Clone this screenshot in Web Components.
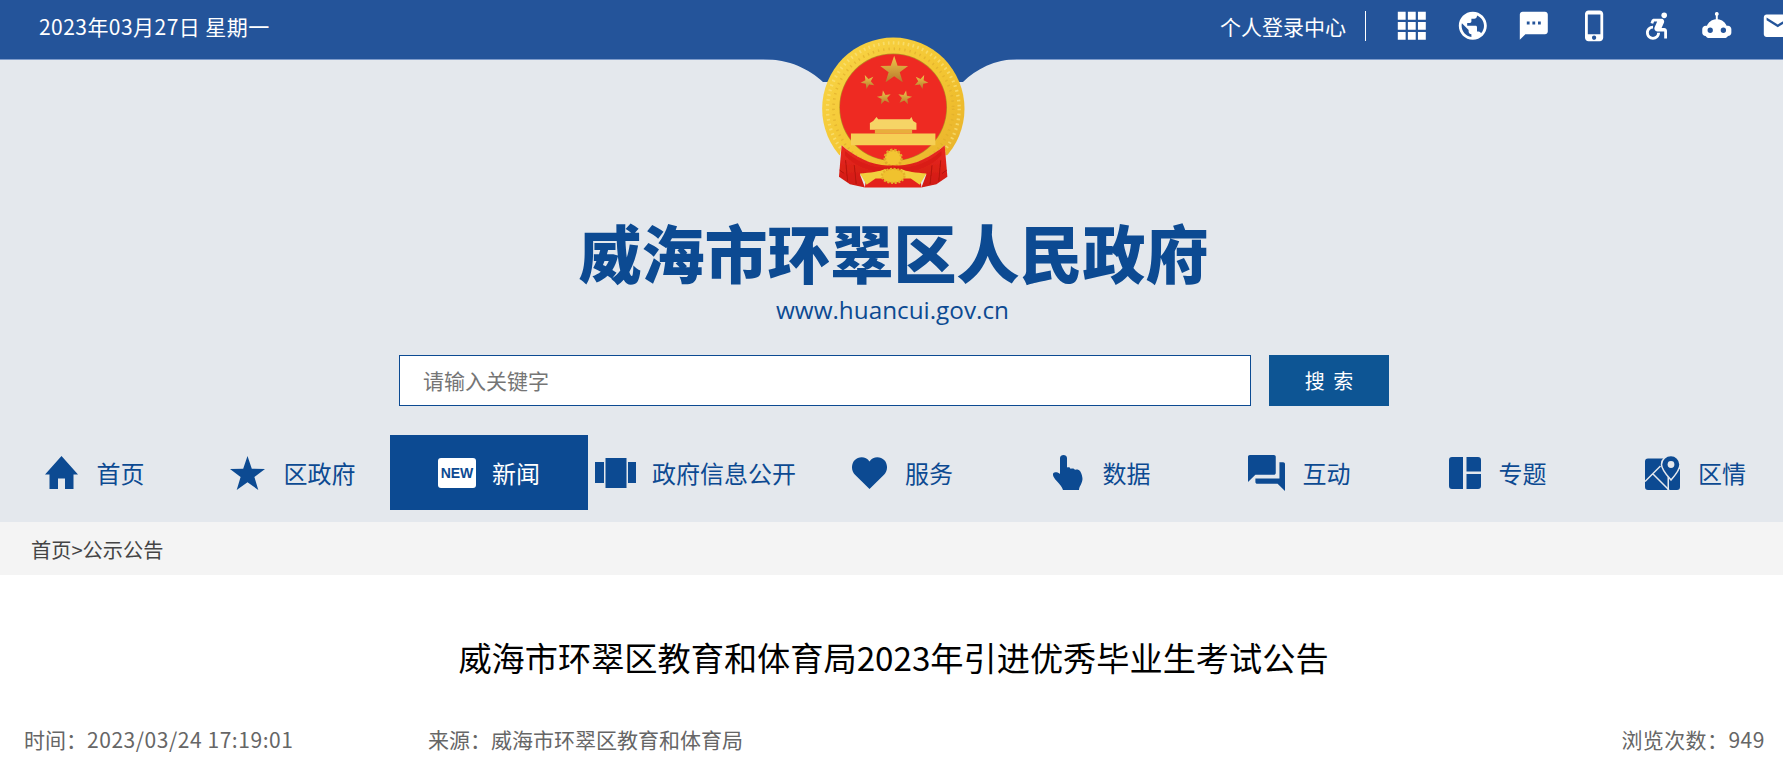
<!DOCTYPE html>
<html lang="zh-CN">
<head>
<meta charset="utf-8">
<title>威海市环翠区人民政府</title>
<style>
    html, body { margin: 0; padding: 0; height: 100%; overflow: hidden; background: #fff; }
    body { font-family: "Noto Sans CJK SC", "Noto Sans", sans-serif; }
    .top-ic { display: block; width: 33.6px; height: 33.6px; fill: #fff; }
    .nav-ic { display: block; fill: currentColor; }
</style>
</head>
<body>

<site-topbar date="2023年03月27日 星期一" login="个人登录中心">
    <svg class="top-ic" viewBox="0 0 24 24"><path d="M2 2h5.6v5.6H2zM9.2 2h5.6v5.6H9.2zM16.4 2H22v5.6h-5.6zM2 9.2h5.6v5.6H2zM9.2 9.2h5.6v5.6H9.2zM16.4 9.2H22v5.6h-5.6zM2 16.4h5.6V22H2zM9.2 16.4h5.6V22H9.2zM16.4 16.4H22V22h-5.6z"/></svg>
    <svg class="top-ic" viewBox="0 0 24 24"><path d="M12 2C6.48 2 2 6.48 2 12s4.48 10 10 10 10-4.48 10-10S17.52 2 12 2zm-1 17.93c-3.95-.49-7-3.85-7-7.93 0-.62.08-1.21.21-1.79L9 15v1c0 1.1.9 2 2 2v1.93zm6.9-2.54c-.26-.81-1-1.39-1.9-1.39h-1v-3c0-.55-.45-1-1-1H8v-2h2c.55 0 1-.45 1-1V7h2c1.1 0 2-.9 2-2v-.41c2.93 1.19 5 4.06 5 7.41 0 2.08-.8 3.97-2.1 5.39z"/></svg>
    <svg class="top-ic" viewBox="0 0 24 24"><path d="M20 2H4c-1.1 0-1.99.9-1.99 2L2 22l4-4h14c1.1 0 2-.9 2-2V4c0-1.1-.9-2-2-2zM9 11H7V9h2v2zm4 0h-2V9h2v2zm4 0h-2V9h2v2z"/></svg>
    <svg class="top-ic" viewBox="0 0 24 24"><path d="M15.5 1h-8C6.12 1 5 2.12 5 3.5v17C5 21.88 6.12 23 7.5 23h8c1.38 0 2.5-1.12 2.5-2.5v-17C18 2.12 16.88 1 15.5 1zm-4 21c-.83 0-1.5-.67-1.5-1.5s.67-1.5 1.5-1.5 1.5.67 1.5 1.5-.67 1.5-1.5 1.5zm4.500-4H7V4h9v14z"/></svg>
    <svg class="top-ic" viewBox="0 0 24 24"><circle cx="18" cy="4.54" r="2"/><path d="M15 17h-2c0 1.65-1.35 3-3 3s-3-1.35-3-3 1.35-3 3-3v-2c-2.76 0-5 2.24-5 5s2.24 5 5 5 5-2.24 5-5zm3-3.5h-1.86l1.67-3.67C18.42 8.5 17.44 7 15.96 7h-5.2c-.81 0-1.54.47-1.87 1.2L8.22 10l1.92.53.65-1.53H13l-1.83 4.1c-.6 1.33.39 2.9 1.85 2.9H18v5h2v-5.5c0-1.1-.9-2-2-2z"/></svg>
    <svg class="top-ic" viewBox="0 0 24 24"><path fill-rule="evenodd" d="M12 2.200a1.400 1.400 0 0 1 .7 2.600v2.500c3 .3 5.400 2.200 6.300 4.700h1c1.300 0 2.300 1 2.400 2.300v2.700c0 1.300-1 2.300-2.400 2.300-.5.900-1.400 1.500-2.500 1.500H6.500c-1.100 0-2-.6-2.500-1.500-1.400 0-2.400-1-2.400-2.300v-2.700c.1-1.300 1.100-2.300 2.400-2.300h1c.9-2.500 3.300-4.400 6.300-4.700V4.800a1.400 1.400 0 0 1 .7-2.600zM7.300 13.300a1.900 1.900 0 1 0 0 3.800 1.900 1.900 0 0 0 0-3.800zm9.400 0a1.900 1.900 0 1 0 0 3.800 1.900 1.900 0 0 0 0-3.800z"/></svg>
    <svg class="top-ic" viewBox="0 0 24 24"><path d="M20 4H4c-1.100 0-2 .9-2 2v12c0 1.100.9 2 2 2h16c1.100 0 2-.9 2-2V6c0-1.100-.9-2-2-2zm0 4l-8 5-8-5V6l8 5 8-5v2z"/></svg>
</site-topbar>

<site-masthead title="威海市环翠区人民政府" url="www.huancui.gov.cn">
    <gov-emblem></gov-emblem>
    <search-box slot="search" placeholder="请输入关键字" label="搜 索"></search-box>
    <site-nav slot="nav">
        <nav-item label="首页" gap="19" style="padding-left:3px">
            <svg class="nav-ic" width="33" height="33" viewBox="0 0 33 33"><path d="M16.500 0 33 18.500h-4.500V33h-8.500V22.500h-7V33H4.500V18.500H0z"/></svg>
        </nav-item>
        <nav-item label="区政府" gap="19" style="padding-left:3px">
            <svg class="nav-ic" width="35" height="34" viewBox="0 0 35 34"><path d="M17.500 0l4.300 12.800 13.200.2-10.600 8 3.900 13-10.800-7.800L6.700 34l3.900-13L0 13l13.200-.2z"/></svg>
        </nav-item>
        <nav-item label="新闻" gap="16" active>
            <new-badge>NEW</new-badge>
        </nav-item>
        <nav-item label="政府信息公开" gap="16">
            <svg class="nav-ic" width="41" height="30" viewBox="0 0 41 30"><path d="M0 4h9v21H0zM10.500 0h21v30h-21zM33 4h8v21h-8z"/></svg>
        </nav-item>
        <nav-item label="服务" gap="18">
            <svg class="nav-ic" width="35" height="32" viewBox="0 0 35 32"><path d="M17.500 32 3 17.800C-1 13.800-.9 7 2.600 3.300 6.700-1 13.900-.9 17.500 4.500 21.100-.9 28.300-1 32.400 3.300c3.500 3.700 3.600 10.500-.4 14.500z"/></svg>
        </nav-item>
        <nav-item label="数据" gap="20">
            <svg class="nav-ic" width="30" height="35" viewBox="0 0 30 35"><path d="M7 3c0-4 7-4 7 0v9.500c.5-.3 1.400-.5 2.200-.2.800.3 1.300 1 1.500 1.600 1-.7 3.500-.7 4.300 1 1.200-.8 4-.6 5.200 1.300 1.300 1.900 2.300 5.700 2.300 7.800 0 2-1.500 5.500-2.500 7.300-.5 1-1 2.700-1 3.700H10c-.4-1.600-1.300-3-2.400-4.500C5.200 27.500 2.500 25 1 22.500c-1.100-1.900-1.300-3.400-.7-4.200 1.200-1.600 4.800-1.400 6.700.7z"/></svg>
        </nav-item>
        <nav-item label="互动" gap="18">
            <svg class="nav-ic" width="37" height="36" viewBox="2 2 20 20" preserveAspectRatio="none"><path d="M21 6h-2v9H6v2c0 .55.45 1 1 1h11l4 4V7c0-.55-.45-1-1-1zm-4 6V3c0-.55-.45-1-1-1H3c-.55 0-1 .45-1 1v14l4-4h10c.55 0 1-.45 1-1z"/></svg>
        </nav-item>
        <nav-item label="专题" gap="18" style="padding-left:3px">
            <svg class="nav-ic" width="32" height="32" viewBox="0 0 32 32"><path d="M3 0h11v32H3a3 3 0 0 1-3-3V3a3 3 0 0 1 3-3zM17.500 0H29a3 3 0 0 1 3 3v11.500H17.500zM17.500 17H32v12a3 3 0 0 1-3 3H17.500z"/></svg>
        </nav-item>
        <nav-item label="区情" gap="18">
            <svg class="nav-ic" width="35" height="35" viewBox="0 0 35 35">
                <path d="M3 3.500h19.500V35H3a3 3 0 0 1-3-3V6.500a3 3 0 0 1 3-3zM26 14h9v18a3 3 0 0 1-3 3h-8V14z"/>
                <path d="M26 .5c-5.300 0-9.500 4-9.500 9 0 5.200 5.500 11 9.500 15.500 4-4.500 9-10.300 9-15.500 0-5-4.200-9-9-9z" stroke="#e4e8ed" stroke-width="1.500"/>
                <circle cx="26" cy="9.500" r="3.400" fill="#e4e8ed"/>
                <path d="M0 26.500 15.500 11M7.500 18.500 24 35" fill="none" stroke="#e4e8ed" stroke-width="1.500"/>
            </svg>
        </nav-item>
    </site-nav>
</site-masthead>

<site-crumb>首页&gt;公示公告</site-crumb>

<article-head title="威海市环翠区教育和体育局2023年引进优秀毕业生考试公告"
    time="2023/03/24 17:19:01" source="威海市环翠区教育和体育局" views="949"></article-head>

<script>
class SiteTopbar extends HTMLElement {
    constructor() {
        super();
        this.$shadow = this.attachShadow({ mode: 'open' });
    }

    connectedCallback() {
        this.$shadow.innerHTML = `
            <style>
                :host {
                    display: flex;
                    align-items: center;
                    box-sizing: border-box;
                    height: 60px;
                    padding: 0 0 7px 39px;
                    background-color: #24549a;
                    border-bottom: 1px solid #7f9ccb;
                    color: #fff;
                    font-size: 21px;
                    overflow: hidden;
                }
                .date { flex: 1; letter-spacing: .45px; white-space: nowrap; }
                .login {
                    padding-right: 19px;
                    border-right: 1px solid #fff;
                    line-height: 30px;
                    white-space: nowrap;
                }
                .icons { display: flex; flex: none; width: 402px; margin-left: 15px; }
                ::slotted(svg) { flex: none; margin: 0 13.7px; }
            </style>
            <span class="date">${this.getAttribute('date')}</span>
            <span class="login">${this.getAttribute('login')}</span>
            <div class="icons"><slot></slot></div>
        `;
    }
}

class SiteMasthead extends HTMLElement {
    constructor() {
        super();
        this.$shadow = this.attachShadow({ mode: 'open' });
    }

    connectedCallback() {
        this.$shadow.innerHTML = `
            <style>
                :host {
                    display: block;
                    position: relative;
                    box-sizing: border-box;
                    height: 462px;
                    padding-top: 156px;
                    background-color: #e4e8ed;
                    color: #0c4a92;
                    text-align: center;
                }
                h1 {
                    margin: 0 0 0 4px;
                    font-size: 63px;
                    font-weight: 900;
                    line-height: 70px;
                }
                .url {
                    margin: 7px 0 28px 2px;
                    font-family: "Open Sans", sans-serif;
                    font-size: 24.3px;
                    line-height: 34px;
                }
            </style>
            <slot></slot>
            <h1>${this.getAttribute('title')}</h1>
            <div class="url">${this.getAttribute('url')}</div>
            <slot name="search"></slot>
            <slot name="nav"></slot>
        `;
    }
}

class GovEmblem extends HTMLElement {
    constructor() {
        super();
        this.$shadow = this.attachShadow({ mode: 'open' });
    }

    star(cx, cy, r, rot) {
        let pts = [];
        for (let i = 0; i < 10; i++) {
            const rad = i % 2 ? r * 0.4 : r;
            const a = (rot - 90 + i * 36) * Math.PI / 180;
            pts.push((cx + rad * Math.cos(a)).toFixed(1) + ',' + (cy + rad * Math.sin(a)).toFixed(1));
        }
        return `<polygon points="${pts.join(' ')}" fill="url(#st)"/>`;
    }

    // left half of the drape, the right one is the same mirrored round x=205
    drape() {
        return `
            <path d="M50 105C90 140 150 172 205 165V192H105L120 232 75 222 42 200z" fill="url(#drape)"/>
            <path d="M62 150 68 214M88 165 94 222M44 180 58 190" fill="none" stroke="#b3140d" stroke-width="3"/>
            <path d="M60 122C100 160 160 182 205 168V178C160 192 95 175 60 135z" fill="#d91c14"/>
            <path d="M105 190C135 188 165 185 182 176L192 205H152L125 224z" fill="#f2cf3d"/>
        `;
    }

    connectedCallback() {
        this.$shadow.innerHTML = `
            <style>
                :host { display: block; position: absolute; left: 0; top: -1px; width: 100%; height: 140px; pointer-events: none; }
                svg { position: absolute; display: block; }
                .curve { left: 763px; top: 0; }
                .mark { left: 822px; top: -22px; }
            </style>
            <svg class="curve" width="254" height="24" viewBox="0 0 254 24">
                <path d="M0 0C27 .5 46 10 60 23h140C213 10 232 .5 254 0z" fill="#24549a"/>
            </svg>
            <svg class="mark" width="143" height="152" viewBox="246 50 430 456">
                <defs>
                    <linearGradient id="gold" x1="0" y1="0" x2="1" y2="1">
                        <stop offset="0" stop-color="#f9d648"/>
                        <stop offset=".55" stop-color="#f3c531"/>
                        <stop offset="1" stop-color="#e6ae2a"/>
                    </linearGradient>
                    <linearGradient id="st" x1="0" y1="0" x2="0" y2="1">
                        <stop offset="0" stop-color="#f2c64a"/>
                        <stop offset="1" stop-color="#b5792c"/>
                    </linearGradient>
                    <linearGradient id="drape" x1="0" y1="0" x2="0" y2="1">
                        <stop offset="0" stop-color="#ea2a20"/>
                        <stop offset="1" stop-color="#d01a12"/>
                    </linearGradient>
                    <clipPath id="ringclip">
                        <path d="M-255-270H600V135H362L360 105C320 140 260 172 205 172 150 172 90 140 50 105L45 135H-255z"/>
                    </clipPath>
                    <filter id="soft" x="-5%" y="-5%" width="110%" height="110%">
                        <feGaussianBlur stdDeviation="1.500"/>
                    </filter>
                </defs>
                <g filter="url(#soft)">
                    <g transform="translate(255 270)">
                        <g clip-path="url(#ringclip)">
                            <g transform="translate(-255 -270)">
                                <circle cx="460.500" cy="265" r="214" fill="url(#gold)"/>
                                <circle cx="460.500" cy="265" r="198" fill="none" stroke="#fbe27a" stroke-width="10" stroke-dasharray="5 10" opacity=".7"/>
                                <circle cx="460.500" cy="265" r="180" fill="none" stroke="#dfae2c" stroke-width="8" stroke-dasharray="4 12" opacity=".7"/>
                                <circle cx="460" cy="261" r="162" fill="#b98a24"/>
                                <circle cx="460" cy="261" r="160" fill="#ee2a24"/>
                            </g>
                        </g>
                        <path d="M155 20 160 27H255L260 20 265 32 275 38V58H135V38L145 32z" fill="#f6d466"/>
                        <path d="M150 58H262V70H150z" fill="#e8ae3a"/>
                        <path d="M78 70H332V105H78z" fill="#f6cf55"/>
                        <circle cx="205" cy="144" r="25" fill="#f3c531" stroke="#e2a92c" stroke-width="8" stroke-dasharray="7 5"/>
                        <path d="M120 232 125 190H285L290 232z" fill="#e4231c"/>
                        ${this.drape()}
                        <g transform="translate(410 0) scale(-1 1)">${this.drape()}</g>
                        <ellipse cx="205" cy="197" rx="34" ry="21" fill="#f0c22f" stroke="#e5b12b" stroke-width="7" stroke-dasharray="6 5"/>
                    </g>
                    ${this.star(463, 150, 44, 0)}
                    ${this.star(384, 184, 22, -25)}
                    ${this.star(544, 184, 22, 25)}
                    ${this.star(433, 232, 22, -10)}
                    ${this.star(495, 232, 22, 10)}
                </g>
            </svg>
        `;
    }
}

class SearchBox extends HTMLElement {
    constructor() {
        super();
        this.$shadow = this.attachShadow({ mode: 'open' });
    }

    connectedCallback() {
        this.$shadow.innerHTML = `
            <style>
                :host { display: flex; justify-content: center; gap: 18px; height: 51px; margin-left: 5px; }
                input {
                    box-sizing: border-box;
                    width: 852px;
                    height: 51px;
                    padding: 0 23px 2px;
                    border: 1px solid #0c4a92;
                    border-radius: 0;
                    outline: none;
                    background: #fff;
                    font: 21px "Noto Sans CJK SC", sans-serif;
                }
                input::placeholder { color: #757575; opacity: 1; }
                button {
                    width: 120px;
                    height: 51px;
                    padding: 0;
                    border: 0;
                    background-color: #0d5594;
                    color: #fff;
                    font: 20px "Noto Sans CJK SC", sans-serif;
                    word-spacing: 4px;
                }
            </style>
            <input type="text" placeholder="${this.getAttribute('placeholder')}">
            <button>${this.getAttribute('label')}</button>
        `;
    }
}

class SiteNav extends HTMLElement {
    constructor() {
        super();
        this.$shadow = this.attachShadow({ mode: 'open' });
    }

    connectedCallback() {
        this.$shadow.innerHTML = `
            <style>
                :host {
                    display: grid;
                    grid-template-columns: 198px 198px 198px 215px 199px 199px 196px 198px 201px;
                    width: 1802px;
                    height: 75px;
                    margin: 29px 0 0 -6px;
                }
            </style>
            <slot></slot>
        `;
    }
}

class NavItem extends HTMLElement {
    constructor() {
        super();
        this.$shadow = this.attachShadow({ mode: 'open' });
    }

    connectedCallback() {
        this.$shadow.innerHTML = `
            <style>
                :host {
                    display: flex;
                    align-items: center;
                    justify-content: center;
                    gap: ${this.getAttribute('gap')}px;
                    color: #0c4a92;
                    font-size: 24px;
                    white-space: nowrap;
                }
                :host([active]) { background-color: #0c4a92; color: #fff; }
            </style>
            <slot></slot>
            <span>${this.getAttribute('label')}</span>
        `;
    }
}

class NewBadge extends HTMLElement {
    constructor() {
        super();
        this.$shadow = this.attachShadow({ mode: 'open' });
    }

    connectedCallback() {
        this.$shadow.innerHTML = `
            <style>
                :host {
                    display: flex;
                    align-items: center;
                    justify-content: center;
                    width: 38px;
                    height: 30px;
                    border-radius: 3px;
                    background-color: #fff;
                    color: #0c4a92;
                    font: bold 14px "Liberation Sans", sans-serif;
                }
            </style>
            <slot></slot>
        `;
    }
}

class SiteCrumb extends HTMLElement {
    constructor() {
        super();
        this.$shadow = this.attachShadow({ mode: 'open' });
    }

    connectedCallback() {
        this.$shadow.innerHTML = `
            <style>
                :host {
                    display: block;
                    box-sizing: border-box;
                    height: 53px;
                    padding-left: 31px;
                    background-color: #f4f4f4;
                    color: #444;
                    font-size: 20.2px;
                    line-height: 56px;
                }
            </style>
            <slot></slot>
        `;
    }
}

class ArticleHead extends HTMLElement {
    constructor() {
        super();
        this.$shadow = this.attachShadow({ mode: 'open' });
    }

    connectedCallback() {
        this.$shadow.innerHTML = `
            <style>
                :host { display: block; background: #fff; }
                h2 {
                    margin: 0;
                    padding: 59px 0 0 4px;
                    color: #000;
                    font-size: 33.2px;
                    font-weight: 400;
                    line-height: 46px;
                    text-align: center;
                }
                .meta {
                    display: flex;
                    margin-top: 45px;
                    padding: 0 18px 0 24px;
                    color: #666;
                    font-size: 21px;
                    line-height: 28px;
                    white-space: nowrap;
                }
                .time { width: 404px; }
                .source { flex: 1; }
                .num { letter-spacing: .55px; }
                .views { letter-spacing: .4px; }
            </style>
            <h2>${this.getAttribute('title')}</h2>
            <div class="meta">
                <span class="time">时间：<span class="num">${this.getAttribute('time')}</span></span>
                <span class="source">来源：${this.getAttribute('source')}</span>
                <span class="views">浏览次数：<span class="num">${this.getAttribute('views')}</span></span>
            </div>
        `;
    }
}

window.customElements.define('site-topbar', SiteTopbar);
window.customElements.define('site-masthead', SiteMasthead);
window.customElements.define('gov-emblem', GovEmblem);
window.customElements.define('search-box', SearchBox);
window.customElements.define('site-nav', SiteNav);
window.customElements.define('nav-item', NavItem);
window.customElements.define('new-badge', NewBadge);
window.customElements.define('site-crumb', SiteCrumb);
window.customElements.define('article-head', ArticleHead);
</script>
</body>
</html>
